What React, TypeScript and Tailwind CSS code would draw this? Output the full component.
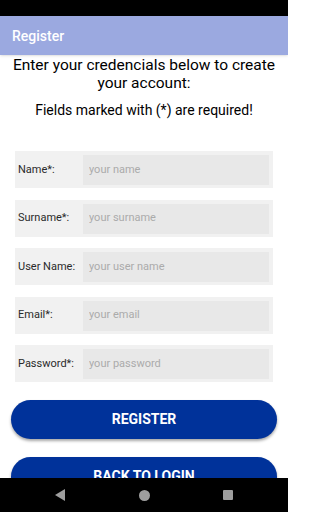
import React from "react";

const fields = [
  { label: "Name*:", placeholder: "your name" },
  { label: "Surname*:", placeholder: "your surname" },
  { label: "User Name:", placeholder: "your user name" },
  { label: "Email*:", placeholder: "your email" },
  { label: "Password*:", placeholder: "your password" },
];

export default function App() {
  return (
    <div className="flex h-[512px] w-[288px] flex-col overflow-hidden bg-white font-['Roboto',sans-serif]">
      <div className="h-4 shrink-0 bg-black" />
      <header className="flex h-[39px] shrink-0 items-center bg-[#9BA9E0] pl-3 pt-[1px] shadow-sm">
        <h1 className="text-[14px] font-medium text-white">Register</h1>
      </header>

      <main className="flex-1 overflow-hidden">
        <p className="pt-[1px] text-center text-[15.5px] leading-[18px] text-black">
          Enter your credencials below to create your account:
        </p>
        <p className="mt-[9px] text-center text-[14px] leading-[18px] text-black">
          Fields marked with (*) are required!
        </p>

        <form className="mx-[15px] mt-[32px] flex flex-col gap-[11.5px]">
          {fields.map((f) => (
            <div key={f.label} className="flex h-[37px] items-stretch bg-[#F1F1F1] pb-[3px] pl-[3px] pr-1 pt-1">
              <label className="flex w-[65px] items-center text-[11px] text-[#2a2a2a]">{f.label}</label>
              <input
                className="min-w-0 flex-1 bg-[#E8E8E8] pl-[6px] text-[11px] text-[#222] outline-none placeholder:text-[#ABABAB]"
                placeholder={f.placeholder}
              />
            </div>
          ))}
        </form>

        <div className="mx-[11px] mt-[18px] flex flex-col gap-[18px]">
          <button className="h-[39px] rounded-full bg-[#00329A] text-[14px] font-bold text-white shadow-[0_2px_3px_rgba(0,0,0,0.35)]">
            REGISTER
          </button>
          <button className="h-[39px] rounded-full bg-[#00329A] text-[14px] font-bold text-white shadow-[0_2px_3px_rgba(0,0,0,0.35)]">
            BACK TO LOGIN
          </button>
        </div>
      </main>

      <nav className="flex h-[34px] shrink-0 items-center bg-black px-[18px]">
        <div className="flex flex-1 justify-center">
          <svg width="10" height="12" viewBox="0 0 10 12">
            <path d="M10 0 L10 12 L0 6 Z" fill="#9E9E9E" />
          </svg>
        </div>
        <div className="flex flex-1 justify-center">
          <div className="h-[11px] w-[11px] rounded-full bg-[#9E9E9E]" />
        </div>
        <div className="flex flex-1 justify-center">
          <div className="h-[10px] w-[10px] rounded-[1px] bg-[#9E9E9E]" />
        </div>
      </nav>
    </div>
  );
}
